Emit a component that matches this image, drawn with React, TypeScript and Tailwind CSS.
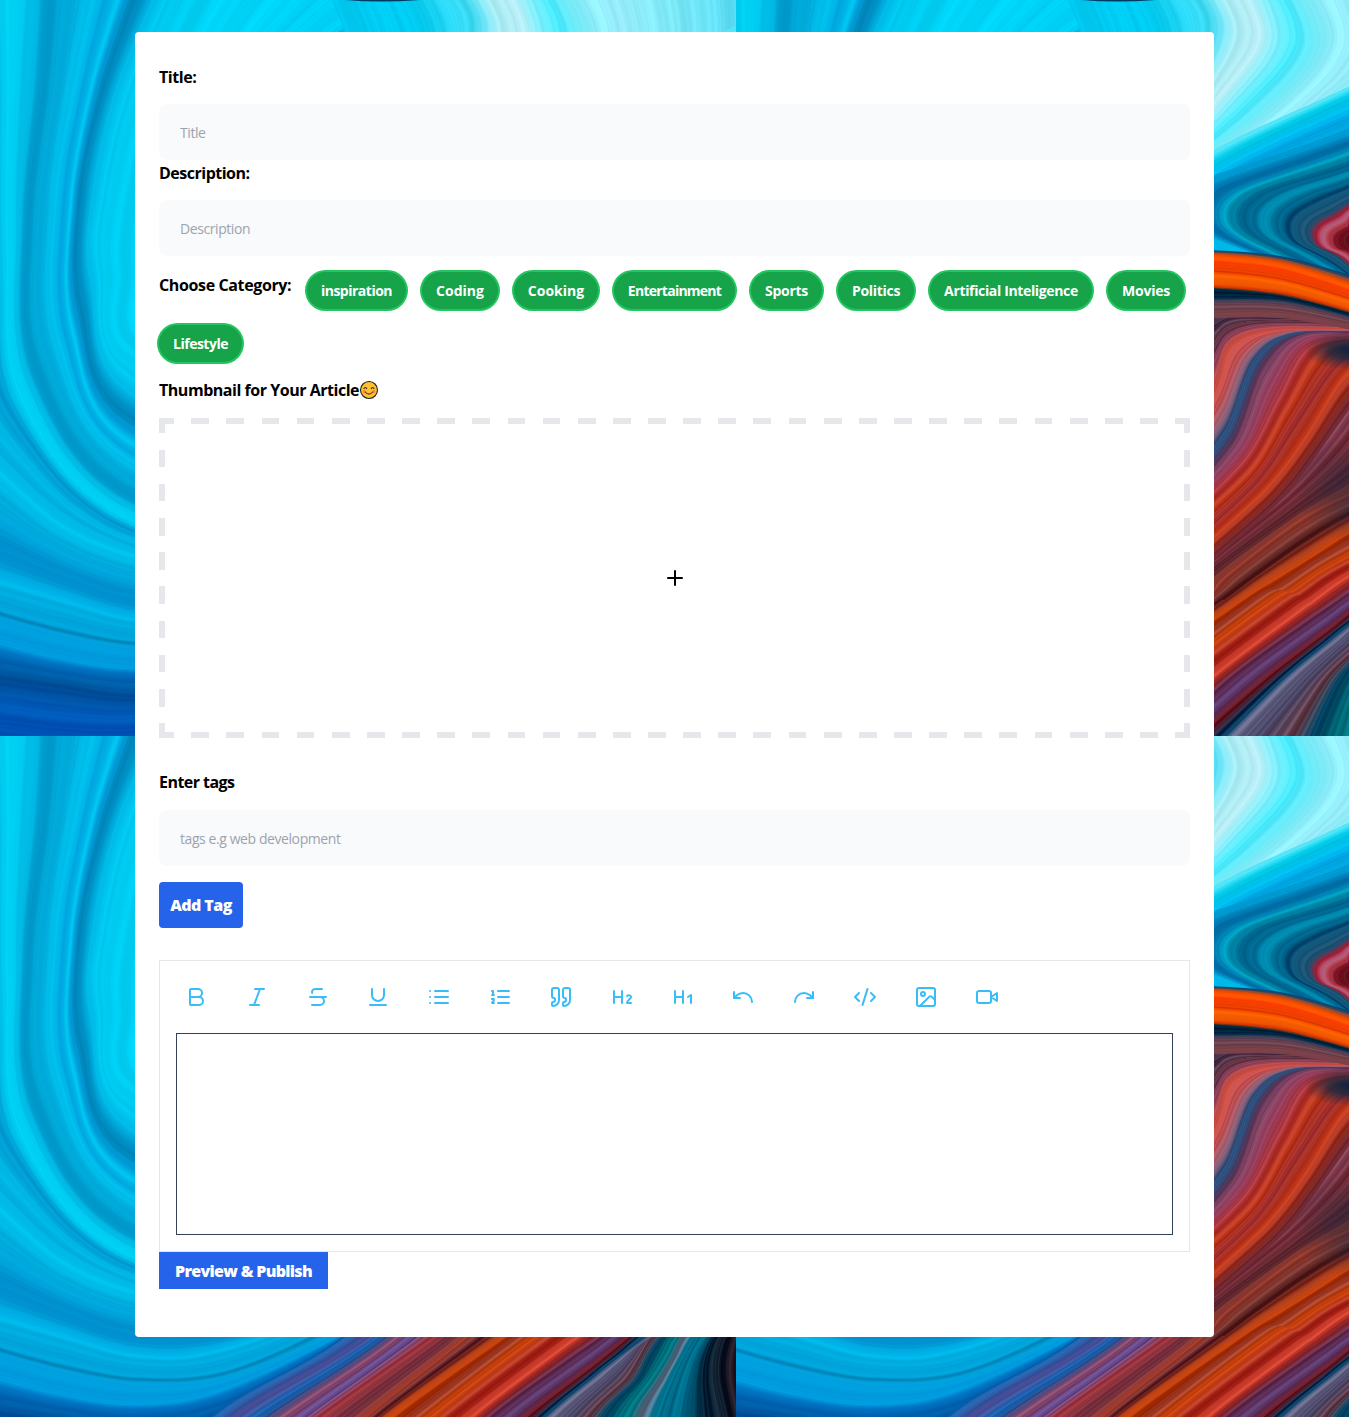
import React from 'react';
import { Bold, Italic, Strikethrough, Underline, Quote, Heading1, Heading2, Undo, Redo, CodeXml, Image, Plus } from 'lucide-react';

type Strand = { c: string; p: number[] };

const rgb = (h: string) => [0, 2, 4].map((i) => parseInt(h.slice(i, i + 2), 16));

/* Smooth curve through a flat list of x,y pairs. */
function smooth(p: number[]) {
  const n = p.length / 2;
  const X = (i: number) => p[2 * Math.max(0, Math.min(n - 1, i))];
  const Y = (i: number) => p[2 * Math.max(0, Math.min(n - 1, i)) + 1];
  let d = `M${X(0).toFixed(1)} ${Y(0).toFixed(1)}`;
  for (let i = 0; i < n - 1; i++) {
    const c = [
      X(i) + (X(i + 1) - X(i - 1)) / 6, Y(i) + (Y(i + 1) - Y(i - 1)) / 6,
      X(i + 1) - (X(i + 2) - X(i)) / 6, Y(i + 1) - (Y(i + 2) - Y(i)) / 6,
      X(i + 1), Y(i + 1),
    ];
    d += 'C' + c.map((v) => v.toFixed(1)).join(' ');
  }
  return d;
}

/* Fine strands blended between neighbouring guide curves. */
function Flow({ keys, step = 1.6, grain = 12, seed = 1 }: { keys: Strand[]; step?: number; grain?: number; seed?: number }) {
  const out: React.ReactNode[] = [];
  let s = seed * 7919;
  const rnd = () => {
    s = (s * 1103515245 + 12345) % 2147483648;
    return s / 2147483648;
  };
  let drift = 0;
  for (let k = 0; k < keys.length - 1; k++) {
    const a = keys[k];
    const b = keys[k + 1];
    let far = 0;
    for (let i = 0; i < a.p.length; i += 2) far = Math.max(far, Math.hypot(a.p[i] - b.p[i], a.p[i + 1] - b.p[i + 1]));
    const n = Math.max(2, Math.ceil(far / step));
    const ca = rgb(a.c);
    const cb = rgb(b.c);
    for (let j = 0; j < n; j++) {
      const t = j / n;
      drift = drift * 0.72 + (rnd() - 0.5) * grain * 1.7;
      const col = ca.map((v, i) => Math.round(Math.max(0, Math.min(255, v + (cb[i] - v) * t + (v > 8 || cb[i] > 8 ? drift : 0)))));
      out.push(
        <path key={`${k}-${j}`} d={smooth(a.p.map((v, i) => v + (b.p[i] - v) * t))} stroke={`rgb(${col.join(',')})`} strokeWidth={step * 2.2} />
      );
    }
  }
  return <g fill="none">{out}</g>;
}

const bowl: Strand[] = [
  { c: '00d0f6', p: [400, -10, 300, 60, 230, 160, 240, 250, 300, 300, 400, 330] },
  { c: '00d4f8', p: [230, -10, 175, 90, 150, 190, 142, 270, 160, 345, 400, 390] },
  { c: '00d0f5', p: [180, -10, 138, 90, 112, 190, 106, 270, 135, 365, 400, 420] },
  { c: '00c4ee', p: [160, -10, 118, 90, 95, 190, 91, 270, 135, 392, 400, 450] },
  { c: '0094c8', p: [145, -10, 106, 90, 84, 190, 84, 300, 135, 412, 400, 475] },
  { c: '0088bc', p: [134, -10, 100, 90, 78, 190, 78, 308, 135, 423, 400, 485] },
  { c: '00a0dc', p: [126, -10, 95, 85, 73, 200, 74, 320, 135, 436, 400, 500] },
  { c: '00c4ee', p: [120, -10, 91, 85, 70, 200, 71, 328, 135, 446, 400, 508] },
  { c: '00a0da', p: [108, -10, 83, 85, 64, 200, 66, 338, 135, 456, 400, 515] },
  { c: '00bce8', p: [94, -10, 74, 85, 54, 200, 57, 340, 135, 464, 400, 522] },
  { c: '00b4e2', p: [84, -10, 65, 85, 49, 200, 52, 345, 135, 472, 400, 528] },
  { c: '00b0e0', p: [70, -10, 58, 85, 40, 210, 46, 352, 135, 481, 400, 535] },
  { c: '00a4d4', p: [56, -10, 48, 85, 32, 220, 39, 360, 135, 490, 400, 540] },
  { c: '0090c4', p: [48, -10, 42, 85, 26, 220, 34, 370, 135, 500, 400, 545] },
  { c: '00b8e4', p: [38, -10, 32, 85, 20, 220, 29, 377, 135, 508, 400, 550] },
  { c: '00ccf2', p: [22, -10, 16, 85, 13, 225, 24, 385, 135, 516, 400, 554] },
  { c: '00d4f4', p: [8, -10, 8, 85, 7, 240, 20, 396, 135, 523, 400, 558] },
  { c: '00b8e4', p: [-10, -10, -4, 85, -2, 270, 16, 408, 135, 529, 400, 561] },
  { c: '0094cc', p: [-24, -10, -12, 85, -10, 310, 12, 418, 135, 534, 400, 564] },
  { c: '00b4e2', p: [-40, 0, -30, 150, -20, 350, 10, 440, 135, 541, 400, 566] },
  { c: '00b8e6', p: [-50, 50, -40, 250, -25, 410, 10, 465, 135, 549, 400, 570] },
];

const basin: Strand[] = [
  { c: '00b0e0', p: [-10, 440, 60, 507, 135, 546, 220, 560, 330, 550, 430, 500] },
  { c: '00c6f0', p: [-10, 464, 60, 525, 135, 557, 220, 570, 340, 560, 430, 510] },
  { c: '00acdc', p: [-10, 492, 60, 543, 135, 571, 220, 580, 345, 560, 430, 515] },
  { c: '00a0d8', p: [-10, 518, 60, 558, 135, 584, 220, 594, 345, 565, 430, 520] },
  { c: '008ece', p: [-10, 550, 60, 578, 135, 602, 220, 600, 345, 570, 430, 525] },
  { c: '00b0e2', p: [-10, 582, 60, 602, 135, 622, 215, 618, 350, 570, 430, 530] },
  { c: '00a4dc', p: [-10, 609, 60, 628, 135, 642, 225, 636, 330, 591, 430, 530] },
  { c: '0084b8', p: [-10, 613, 60, 632, 135, 645, 225, 639, 330, 594, 430, 535] },
  { c: '00a4e2', p: [-10, 617, 60, 636, 135, 649, 225, 643, 330, 601, 430, 540] },
  { c: '009ee2', p: [-10, 642, 60, 660, 135, 670, 215, 658, 330, 606, 430, 545] },
  { c: '0068b8', p: [-10, 653, 60, 668, 135, 676, 220, 664, 340, 606, 430, 550] },
  { c: '005098', p: [-10, 675, 60, 685, 135, 695, 220, 680, 340, 616, 450, 560] },
  { c: '0058b8', p: [-10, 705, 60, 715, 135, 718, 220, 700, 340, 630, 460, 565] },
  { c: '0048b0', p: [-10, 750, 60, 756, 135, 756, 220, 735, 340, 650, 470, 570] },
];

const sweep: Strand[] = [
  { c: '0054a0', p: [140, 750, 225, 672, 345, 601, 478, 478, 530, 400, 560, 345, 640, 330] },
  { c: '5858a0', p: [155, 750, 245, 676, 370, 601, 478, 495, 540, 440, 582, 370, 640, 333] },
  { c: '1060b0', p: [175, 750, 260, 681, 382, 601, 478, 506, 542, 456, 590, 380, 640, 336] },
  { c: '904868', p: [195, 750, 285, 681, 400, 601, 478, 520, 540, 475, 600, 390, 640, 345] },
  { c: '604c94', p: [210, 750, 305, 681, 414, 601, 478, 540, 545, 490, 602, 415, 640, 355] },
  { c: 'a43840', p: [240, 750, 322, 681, 435, 601, 478, 562, 555, 500, 605, 450, 640, 400] },
  { c: '783848', p: [270, 750, 350, 681, 455, 601, 478, 574, 560, 515, 613, 480, 640, 450] },
  { c: '993020', p: [290, 750, 368, 681, 468, 601, 490, 577, 565, 520, 613, 495, 640, 485] },
  { c: '5e2630', p: [300, 750, 378, 681, 485, 601, 520, 575, 570, 540, 613, 515, 640, 505] },
  { c: 'c84008', p: [315, 750, 390, 681, 505, 601, 530, 584, 575, 557, 613, 532, 640, 520] },
  { c: '983828', p: [330, 750, 415, 681, 520, 601, 545, 588, 580, 564, 613, 545, 640, 530] },
  { c: 'd04810', p: [350, 750, 430, 681, 535, 601, 555, 592, 583, 573, 613, 556, 640, 542] },
  { c: 'a82c24', p: [370, 750, 452, 681, 550, 607, 568, 596, 590, 580, 613, 567, 640, 555] },
  { c: 'cc3824', p: [400, 750, 475, 681, 560, 616, 578, 603, 598, 588, 620, 574, 645, 560] },
  { c: '501838', p: [420, 750, 492, 681, 570, 624, 586, 613, 605, 600, 625, 586, 650, 570] },
  { c: '503068', p: [435, 750, 512, 681, 578, 632, 592, 622, 610, 608, 630, 594, 655, 576] },
  { c: '701820', p: [450, 750, 530, 681, 586, 638, 598, 629, 615, 615, 635, 599, 660, 580] },
  { c: '004068', p: [475, 750, 545, 681, 592, 642, 604, 632, 620, 620, 640, 603, 670, 582] },
  { c: '585878', p: [485, 750, 553, 681, 600, 642, 615, 630, 635, 614, 660, 598, 680, 585] },
  { c: '555070', p: [515, 750, 574, 681, 615, 642, 630, 626, 645, 608, 670, 596, 690, 585] },
  { c: '5c3440', p: [550, 750, 591, 681, 628, 645, 642, 622, 655, 601, 680, 590, 700, 580] },
  { c: '004868', p: [572, 750, 604, 681, 638, 645, 650, 622, 665, 601, 690, 590, 710, 580] },
  { c: '005868', p: [592, 750, 619, 681, 646, 645, 660, 622, 672, 601, 696, 590, 716, 580] },
  { c: '00848e', p: [610, 750, 628, 681, 652, 645, 667, 622, 679, 601, 701, 590, 721, 580] },
  { c: '707088', p: [625, 750, 642, 681, 663, 645, 676, 622, 687, 601, 710, 590, 730, 580] },
  { c: '007490', p: [640, 750, 655, 681, 670, 645, 682, 622, 695, 601, 715, 590, 735, 580] },
  { c: '006080', p: [675, 750, 683, 681, 690, 645, 697, 622, 709, 601, 725, 590, 745, 580] },
  { c: '002238', p: [710, 750, 705, 681, 703, 645, 706, 622, 716, 601, 735, 590, 755, 580] },
  { c: '102030', p: [740, 750, 725, 681, 717, 645, 717, 622, 724, 601, 745, 590, 765, 580] },
  { c: '401018', p: [770, 750, 760, 681, 755, 645, 755, 622, 760, 601, 770, 590, 785, 580] },
];

/* The same strands turn red where they rise toward the flame. */
const ember: Strand[] = [
  { c: 'b04458', p: sweep[0].p },
  { c: 'b8303c', p: sweep[1].p },
  { c: 'b83c30', p: sweep[2].p },
  { c: 'c83c24', p: sweep[3].p },
  { c: '7c3c58', p: sweep[4].p },
  { c: '78303c', p: sweep[5].p },
  { c: '643038', p: sweep[6].p },
  { c: '882c20', p: sweep[7].p },
  { c: '5a2828', p: sweep[8].p },
];

const fan: Strand[] = [
  { c: '3c3048', p: [460, 318, 480, 316, 500, 314, 550, 319, 640, 320] },
  { c: '5c3848', p: [440, 380, 476, 345, 495, 326, 540, 322, 640, 325] },
  { c: '884058', p: [450, 420, 478, 365, 496, 336, 540, 326, 640, 329] },
  { c: 'cc4c40', p: [455, 440, 482, 385, 496, 345, 545, 331, 640, 332] },
  { c: 'b8484c', p: [455, 455, 486, 400, 508, 352, 550, 333, 640, 333] },
  { c: '906078', p: [455, 468, 490, 415, 514, 358, 555, 334, 640, 334] },
  { c: '306090', p: [455, 480, 493, 430, 520, 362, 560, 335, 640, 335] },
  { c: '704060', p: [455, 494, 500, 440, 528, 368, 566, 336, 640, 336] },
  { c: 'a04868', p: [455, 506, 508, 448, 536, 385, 570, 341, 640, 338] },
  { c: 'b03840', p: [455, 516, 512, 458, 545, 398, 577, 347, 640, 340] },
  { c: 'c43c20', p: [455, 528, 518, 470, 553, 410, 590, 352, 640, 342] },
  { c: 'a03030', p: [455, 545, 522, 482, 560, 425, 602, 365, 640, 345] },
  { c: 'c83c1c', p: [455, 558, 530, 490, 570, 438, 606, 380, 640, 350] },
  { c: '702c38', p: [455, 578, 540, 504, 580, 455, 612, 410, 640, 380] },
];

/* A rounded bend that opens toward the right edge. */
const bend = (c: string, vx: number, vy: number, uy: number): Strand => {
  const s = Math.min(1, (640 - vx) / 90);
  return { c, p: [700, uy - 40, 622, uy, vx + 34 * s, vy - 28 * s, vx + 8 * s, vy - 14 * s, vx, vy, vx + 8 * s, vy + 16 * s, vx + 45 * s, vy + 36 * s, 650, 300] };
};

const sea: Strand[] = [
  { c: '60e8f8', p: [350, 230, 440, 175, 500, 140, 620, 85, 750, 20] },
  { c: '00d4f2', p: [350, 245, 440, 190, 500, 152, 620, 95, 750, 40] },
  { c: '00a8e4', p: [350, 260, 440, 205, 500, 168, 620, 112, 750, 60] },
  { c: '0094d0', p: [350, 290, 440, 225, 500, 180, 620, 132, 750, 80] },
  { c: '0078b8', p: [350, 330, 440, 260, 500, 210, 620, 150, 750, 110] },
];

const lagoon: Strand[] = [
  bend('00a0d8', 445, 205, 128),
  bend('0080b8', 465, 210, 138),
  bend('0078ac', 480, 213, 146),
  bend('00a4c4', 490, 214, 152),
  bend('0088ac', 500, 215, 158),
  bend('005c88', 512, 217, 165),
  bend('0084a8', 530, 220, 172),
  bend('00749c', 544, 223, 179),
  bend('004c74', 553, 226, 184),
  bend('18587c', 563, 229, 190),
  bend('205070', 574, 232, 198),
  bend('b02840', 581, 235, 204),
  bend('a05070', 588, 237, 209),
  bend('b84050', 593, 238, 215),
  bend('801828', 600, 240, 221),
  bend('58101c', 618, 240, 232),
];

const flame: Strand[] = [
  { c: '004078', p: [400, 250, 478, 252, 550, 259, 640, 285] },
  { c: 'ff5800', p: [400, 254, 478, 256, 550, 265, 640, 294] },
  { c: 'ff4400', p: [400, 262, 478, 263, 550, 272, 640, 301] },
  { c: 'd83000', p: [400, 270, 478, 272, 550, 281, 640, 308] },
  { c: 'ff6800', p: [400, 278, 478, 280, 550, 288, 640, 315] },
  { c: 'f05000', p: [400, 284, 478, 288, 550, 295, 640, 320] },
  { c: '002840', p: [400, 286, 478, 290, 550, 298, 640, 322] },
  { c: '001c38', p: [400, 298, 478, 300, 550, 302, 640, 325] },
  { c: '583040', p: [400, 306, 478, 305, 550, 307, 640, 328] },
  { c: '704048', p: [400, 316, 478, 312, 550, 313, 640, 331] },
  { c: '804048', p: [400, 322, 478, 318, 550, 318, 640, 334] },
];

const foam: Strand[] = [
  { c: '00c8f0', p: [330, -10, 350, 60, 320, 150, 300, 260] },
  { c: '00ccf2', p: [400, -10, 420, 50, 390, 130, 350, 230] },
  { c: '40dcf4', p: [460, -10, 475, 30, 445, 100, 380, 215] },
  { c: 'a8ecf4', p: [484, -10, 500, 35, 470, 95, 400, 200] },
  { c: 'b8ecf4', p: [510, -10, 525, 40, 485, 98, 400, 200] },
  { c: '80f0fc', p: [528, -10, 540, 45, 495, 105, 400, 200] },
  { c: '40e4f8', p: [545, -10, 560, 45, 505, 112, 400, 200] },
  { c: '70ecfa', p: [560, -10, 577, 50, 520, 116, 400, 205] },
  { c: '90f0fc', p: [580, -10, 597, 45, 545, 110, 400, 215] },
  { c: '98ecfa', p: [610, -10, 620, 50, 560, 115, 400, 225] },
  { c: '80ecfa', p: [670, -10, 670, 60, 590, 110, 400, 235] },
  { c: '40d0f0', p: [780, -10, 760, 60, 620, 105, 400, 240] },
];

function Artwork() {
  return (
    <svg className="absolute inset-0 h-full w-full" aria-hidden="true">
      <defs>
        <clipPath id="cell"><rect width="736" height="736" /></clipPath>
        <clipPath id="rise"><rect x="465" y="300" width="180" height="300" /></clipPath>
        <radialGradient id="hollow">
          <stop offset="0" stopColor="#0c2440" />
          <stop offset="0.45" stopColor="#1c2840" stopOpacity="0.8" />
          <stop offset="1" stopColor="#402838" stopOpacity="0" />
        </radialGradient>
        <g id="paint" clipPath="url(#cell)">
          <rect width="736" height="736" fill="#00b8e8" />
          <Flow keys={bowl} seed={2} grain={6} />
          <Flow keys={basin} seed={5} grain={7} />
          <Flow keys={foam} seed={8} grain={7} />
          <Flow keys={sea} seed={4} grain={12} />
          <Flow keys={lagoon} seed={11} grain={14} />
          <rect x="460" y="305" width="180" height="60" fill="#503040" />
          <rect x="460" y="330" width="60" height="180" fill="#28608c" />
          <Flow keys={sweep} seed={3} grain={18} />
          <g clipPath="url(#rise)"><Flow keys={ember} seed={3} grain={18} /></g>
          <Flow keys={fan} seed={6} grain={16} />
          <ellipse cx="613" cy="350" rx="46" ry="20" fill="url(#hollow)" />
          <ellipse cx="625" cy="490" rx="70" ry="55" fill="url(#hollow)" opacity="0.45" />
          <Flow keys={flame} seed={9} grain={18} />
          <path d="M345 0Q380 3 420 0Z" fill="#003c60" />
        </g>
      </defs>
      <use href="#paint" />
      <use href="#paint" x="736" />
      <use href="#paint" y="736" />
      <use href="#paint" x="736" y="736" />
    </svg>
  );
}

function Glyph({ children }: { children: React.ReactNode }) {
  return (
    <svg width="24" height="24" viewBox="0 0 24 24" fill="none" stroke="currentColor" strokeWidth="2" strokeLinecap="round" strokeLinejoin="round">
      {children}
    </svg>
  );
}

const tools = [
  <Bold />, <Italic />, <Strikethrough />, <Underline />,
  <Glyph><path d="M8 6h13M8 12h13M8 18h13M3 6h.01M3 12h.01M3 18h.01" /></Glyph>,
  <Glyph><path d="M10 6h11M10 12h11M10 18h11M4 6h1v4M4 10h2M6 18H4c0-1 2-2 2-3s-1-1.5-2-1" /></Glyph>,
  <Quote />, <Heading2 />, <Heading1 />, <Undo />, <Redo />, <CodeXml />, <Image />,
  <Glyph><path d="m22 8-6 4 6 4V8Z" /><rect x="2" y="6" width="14" height="12" rx="2" /></Glyph>,
];

const categories = [
  { name: 'inspiration', size: 'w-[99px] tracking-[-0.5px]' },
  { name: 'Coding', size: 'w-[76px] tracking-[0px]' },
  { name: 'Cooking', size: 'w-[84px] tracking-[0px]' },
  { name: 'Entertainment', size: 'w-[121px] tracking-[-0.75px]' },
  { name: 'Sports', size: 'w-[71px] tracking-[-0.3px]' },
  { name: 'Politics', size: 'w-[76px] tracking-[-0.3px]' },
  { name: 'Artificial Inteligence', size: 'w-[162px] tracking-[-0.35px]' },
  { name: 'Movies', size: 'w-[76px] tracking-[-0.2px]' },
  { name: 'Lifestyle', size: 'w-[83px] tracking-[-0.5px]' },
];

const field = 'block h-14 w-full rounded-lg bg-[#f9fafb] px-[21px] text-sm placeholder:text-[#9ca3af] tracking-[-0.42px]';

/* Long dashes: 18px marks on a 35px rhythm across, 34px down. */
const dashed =
  '[background-image:repeating-linear-gradient(90deg,#e5e7eb_0_17.8px,transparent_17.8px_35.14px),repeating-linear-gradient(90deg,#e5e7eb_0_17.8px,transparent_17.8px_35.14px),repeating-linear-gradient(180deg,#e5e7eb_0_17.5px,transparent_17.5px_34.2px),repeating-linear-gradient(180deg,#e5e7eb_0_17.5px,transparent_17.5px_34.2px)] [background-size:1040px_6px,1040px_6px,6px_330px,6px_330px] [background-position:-2.9px_0px,-2.9px_314px,0px_-2.6px,1025px_-2.6px] [background-repeat:no-repeat]';

function Smile() {
  return (
    <svg width="20" height="20" viewBox="0 0 20 20" fill="none">
      <circle cx="10" cy="10" r="8.5" fill="#ffc02e" stroke="#222" strokeWidth="1.1" />
      <circle cx="5.3" cy="11.6" r="1.7" fill="#f78a3c" />
      <circle cx="14.7" cy="11.6" r="1.7" fill="#f78a3c" />
      <path d="M5 8.6q1.3-2.2 2.7 0M12.3 8.6q1.3-2.2 2.7 0M6.3 12q3.7 4.2 7.4 0" stroke="#4a3420" strokeWidth="1.1" strokeLinecap="round" />
    </svg>
  );
}

export default function App() {
  return (
    <div className="relative h-[1417px] overflow-hidden bg-[#00b8e8] py-8 font-['Open_Sans',sans-serif] text-black">
      <Artwork />
      <main className="relative mx-auto h-[1305px] w-[1079px] rounded bg-white p-6">
        <label className="block h-12 pt-[9px] text-base font-bold tracking-[-0.45px]">Title:</label>
        <input className={field} placeholder="Title" />
        <label className="block h-10 pt-px text-base font-bold tracking-[-0.5px]">Description:</label>
        <input className={field} placeholder="Description" />

        <div className="mt-4 flex flex-wrap gap-4">
          <span className="w-[132px] pt-px text-base font-bold whitespace-nowrap tracking-[-0.37px]">Choose Category:</span>
          {categories.map((c) => (
            <button key={c.name} className={`h-[37px] rounded-full bg-[#16a34a] pt-px text-center text-sm font-bold whitespace-nowrap text-white ring-2 ring-[#22c55e] ${c.size}`}>
              {c.name}
            </button>
          ))}
        </div>

        <div className="mt-4 flex h-10 items-start text-base font-bold tracking-[-0.47px]">
          <span>Thumbnail for Your Article</span>
          <span className="pt-0.5"><Smile /></span>
        </div>
        <div className={`flex h-80 items-center justify-center ${dashed}`}>
          <Plus size={24} />
        </div>

        <label className="mt-8 block h-10 text-base font-bold tracking-[-0.55px]">Enter tags</label>
        <input className={field} placeholder="tags e.g web development" />
        <button className="mt-4 block h-[46px] w-[84px] rounded bg-[#2563eb] text-base font-extrabold whitespace-nowrap text-white tracking-[-0.55px]">Add Tag</button>

        <section className="mt-8 h-[292px] border border-[#e5e7eb] p-4">
          <div className="flex h-14 items-start pt-2 pl-2 text-[#38bdf8]">
            {tools.map((icon, i) => (
              <div key={i} className="w-[60.83px] shrink-0">{icon}</div>
            ))}
          </div>
          <div className="h-[202px] border border-[#334155]" />
        </section>
        <button className="block h-[37px] w-[169px] bg-[#2563eb] text-base font-extrabold whitespace-nowrap text-white tracking-[-0.68px]">Preview &amp; Publish</button>
      </main>
    </div>
  );
}
